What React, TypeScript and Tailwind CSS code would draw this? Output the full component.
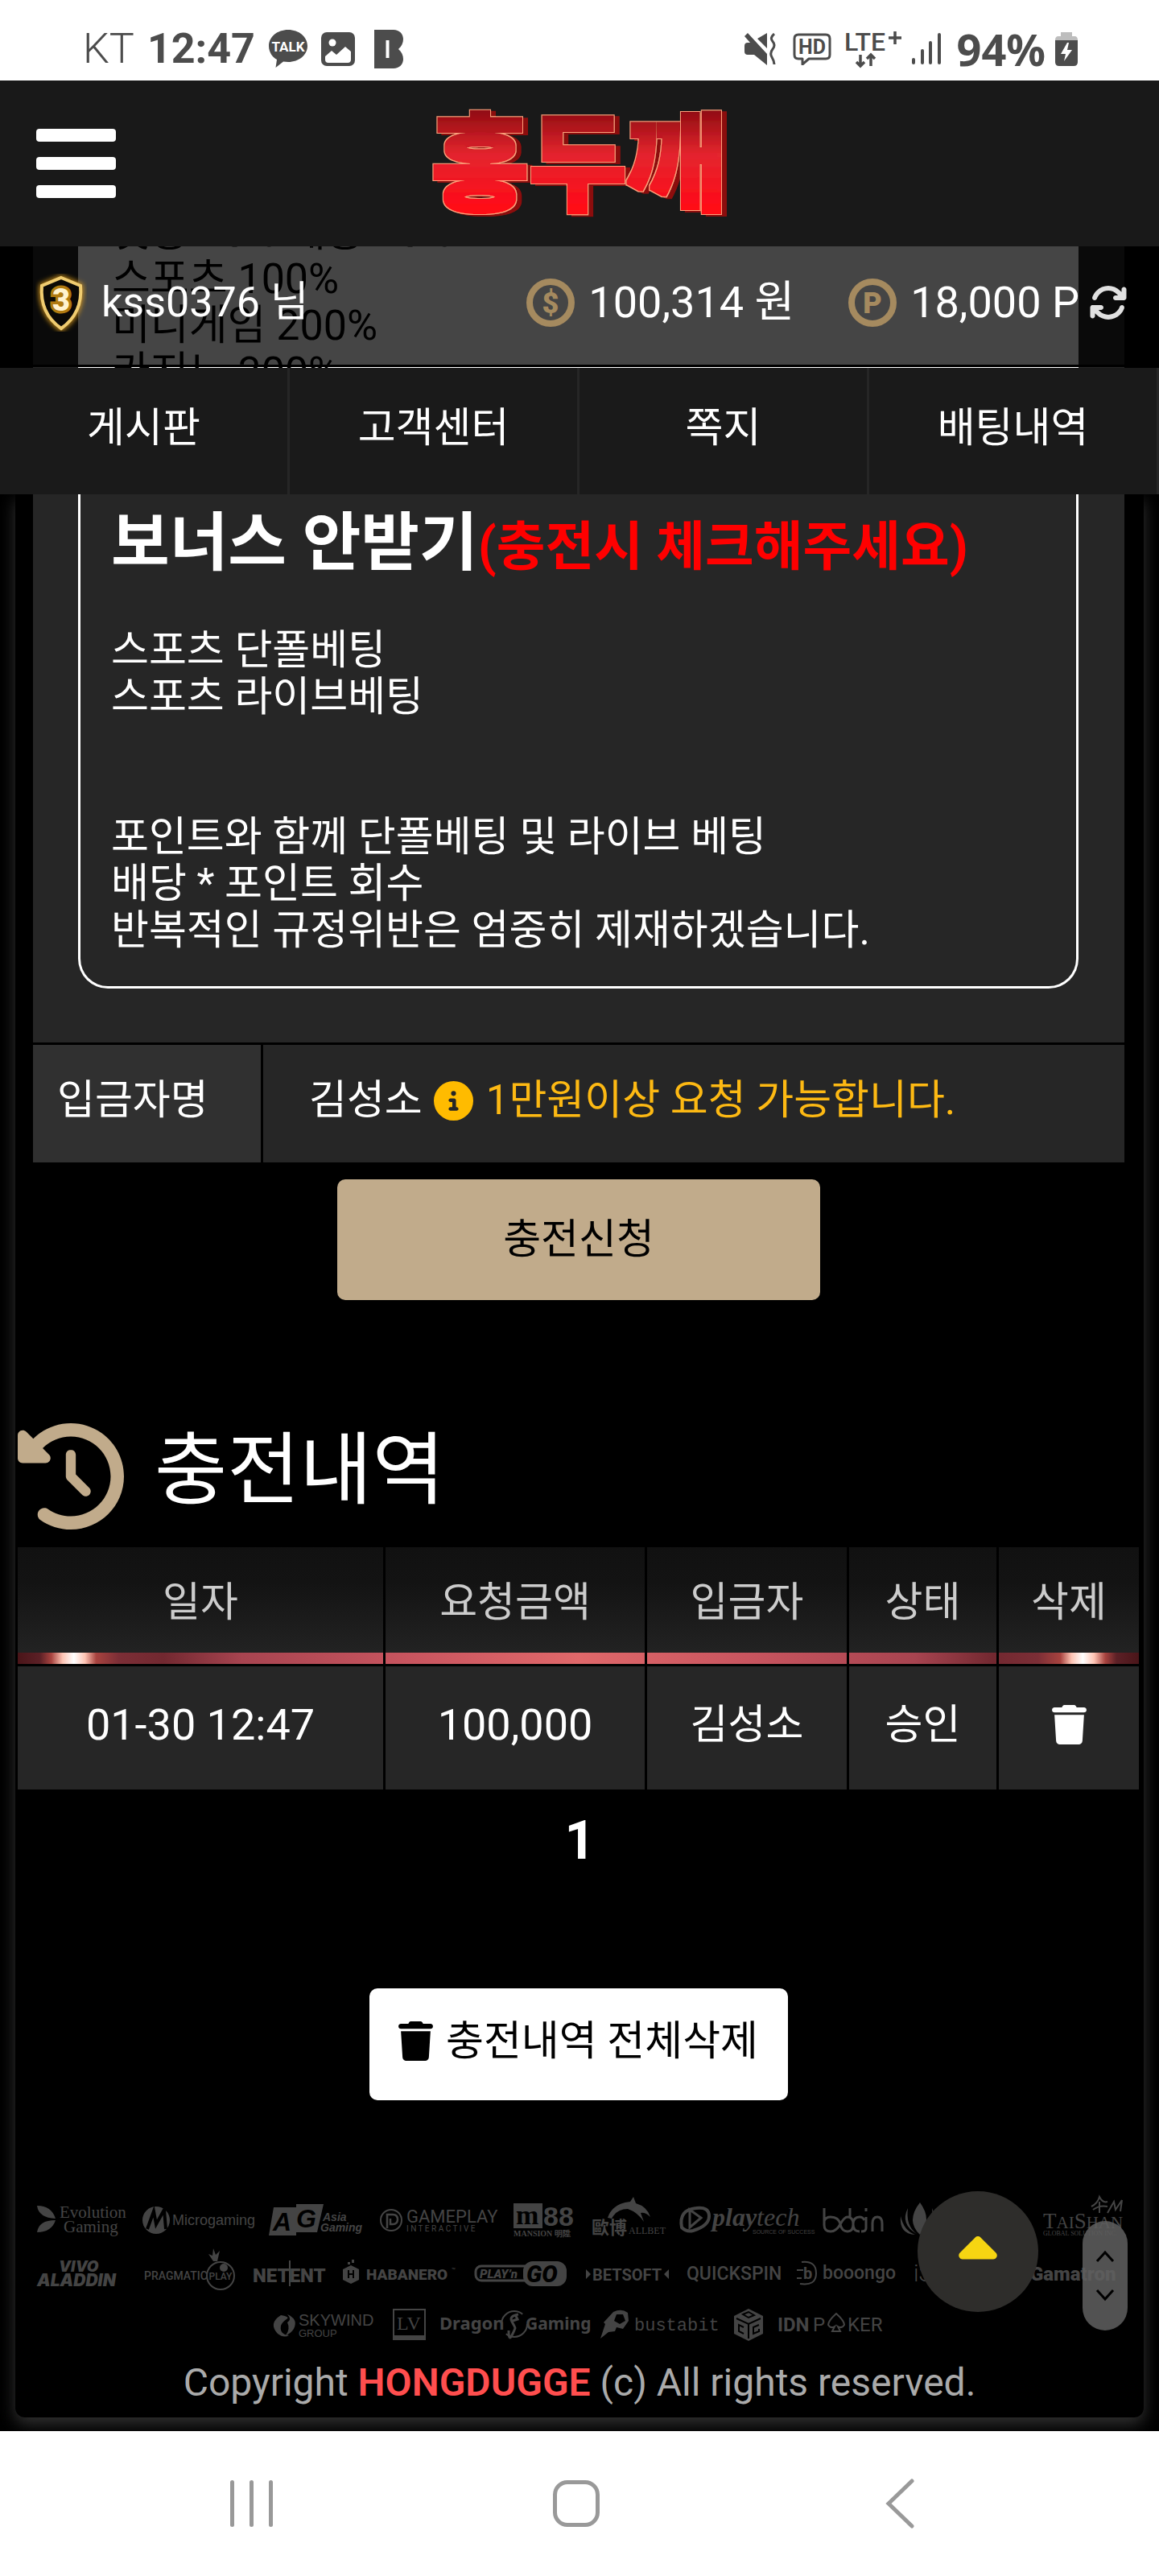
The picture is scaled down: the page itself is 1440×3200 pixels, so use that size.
import clsx from "clsx";
import { ReactNode } from "react";
import {
  FaArrowsRotate,
  FaCaretUp,
  FaCircleInfo,
  FaClockRotateLeft,
  FaTrash,
} from "react-icons/fa6";

const tabs = ["게시판", "고객센터", "쪽지", "배팅내역"];

const columns = [
  { label: "일자", width: "w-[457px]" },
  { label: "요청금액", width: "w-[325px]" },
  { label: "입금자", width: "w-[251px]" },
  { label: "상태", width: "w-[186px]" },
  { label: "삭제", width: "w-[174px]" },
];

const history = [
  { date: "01-30 12:47", amount: "100,000", name: "김성소", status: "승인" },
];

const StatusBar = () => (
  <div className="flex h-[100px] items-center justify-between bg-white pt-[22px] pr-[101px] pl-[103px] text-[52px] leading-none text-[#4c4c4c]">
    <div className="flex items-center">
      <span className="font-light">KT</span>
      <span className="ml-4 font-bold">12:47</span>
      <svg className="ml-4 h-12 w-[50px]" viewBox="0 0 50 48" fill="currentColor">
        <path d="M25 0C11.500 0 1 8.800 1 20c0 8 4.500 14 10 17L9.500 47 19 39.600c2 .300 4 .400 6 .400 13.500 0 24-8.800 24-20S38.500 0 25 0z" />
        <text x="25" y="27" textAnchor="middle" fontSize="17" fontWeight="700" fill="#fff">
          TALK
        </text>
      </svg>
      <svg className="ml-4 h-[42px] w-[42px]" viewBox="0 0 42 42">
        <rect width="42" height="42" rx="7" fill="currentColor" />
        <circle cx="14" cy="13" r="4.500" fill="#fff" />
        <path d="M5 30l8-7 6 5 11-10 7 6v10a4 4 0 0 1-4 4H9a4 4 0 0 1-4-4z" fill="#fff" />
      </svg>
      <svg className="ml-6 h-12 w-9" viewBox="0 0 36 48">
        <path
          d="M0 0h24c7 0 12 5 12 11.500 0 5-2 9-6 12.500 4 3.500 6 7.500 6 12.500C36 43 31 48 24 48H0z"
          fill="currentColor"
        />
        <path d="M16.500 13v22" stroke="#fff" strokeWidth="4" />
      </svg>
    </div>
    <div className="flex items-center">
      <svg className="h-10 w-10" viewBox="0 0 40 40" fill="currentColor">
        <path d="M0 16q0-4 4-4h3L0 4l4-4 24 26v14L12 27H4q-4 0-4-4zM16 7l12-7v19z" />
        <path
          d="M37 1q-6 5-2 9.500t0 9.500-1 10 3 9"
          fill="none"
          stroke="currentColor"
          strokeWidth="3"
        />
      </svg>
      <svg className="ml-5 h-10 w-12" viewBox="0 0 48 40" fill="none" stroke="currentColor" strokeWidth="3">
        <path d="M7 2h34q5 0 5 5v20q0 5-5 5H20l-8 7v-7H7q-5 0-5-5V7q0-5 5-5z" strokeLinejoin="round" />
        <text x="24" y="26" textAnchor="middle" fontSize="25" fontWeight="700" fill="currentColor" stroke="none">
          HD
        </text>
      </svg>
      <svg className="ml-4 h-12 w-[72px] overflow-visible" viewBox="0 0 72 48" fill="currentColor">
        <text x="0" y="26" fontSize="32" fontWeight="500">
          LTE
        </text>
        <path
          d="M63 2v16M55 10h16M20 31v14m-5-5 5 5 5-5M33 45V31m-5 5 5-5 5 5"
          fill="none"
          stroke="currentColor"
          strokeWidth="3.500"
        />
      </svg>
      <svg className="ml-3 h-10 w-9" viewBox="0 0 36 40" stroke="currentColor" strokeWidth="4" strokeLinecap="round">
        <path d="M2 33v4M13 22v15M23 12v25M34 2v35" />
      </svg>
      <span className="ml-5 font-['Noto_Sans',sans-serif] text-[54px] font-bold">94%</span>
      <svg className="ml-3 h-[42px] w-7" viewBox="0 0 28 42">
        <path d="M7 0h14v5h3q4 0 4 5H0q0-5 4-5h3z" fill="#bdbdbd" />
        <path d="M0 10h28v27q0 5-5 5H5q-5 0-5-5z" fill="currentColor" />
        <path d="M15 13L7 27h6l-2 9 10-14h-6l2-9z" fill="#fff" />
      </svg>
    </div>
  </div>
);

const Logo = () => (
  <svg className="h-[140px] w-[380px] overflow-visible" viewBox="0 0 380 140" role="img" aria-label="홍두깨">
    <defs>
      <linearGradient id="logoFill" x1="0" y1="0" x2="0" y2="1">
        <stop offset="0.150" stopColor="#7d060b" />
        <stop offset="0.500" stopColor="#e3242d" />
        <stop offset="0.850" stopColor="#ff0716" />
      </linearGradient>
      {/* thickened face, bright rim and a dark side going right */}
      <filter id="logoDepth" x="-10%" y="-10%" width="120%" height="120%">
        <feMorphology in="SourceAlpha" operator="dilate" radius="3" result="rimShape" />
        <feFlood floodColor="#ffa07c" />
        <feComposite in2="rimShape" operator="in" result="rim" />
        <feOffset in="rimShape" dx="6" dy="2" result="sideShape" />
        <feFlood floodColor="#8c0d0a" />
        <feComposite in2="sideShape" operator="in" result="side" />
        <feMorphology in="SourceGraphic" operator="dilate" radius="2" result="face" />
        <feMerge>
          <feMergeNode in="side" />
          <feMergeNode in="rim" />
          <feMergeNode in="face" />
        </feMerge>
      </filter>
    </defs>
    <text
      x="188"
      y="118"
      fontFamily='"Noto Sans CJK KR", sans-serif'
      fontSize="132"
      fontWeight="900"
      textAnchor="middle"
      fill="url(#logoFill)"
      filter="url(#logoDepth)"
    >
      홍두깨
    </text>
  </svg>
);

const Header = () => (
  <header className="relative flex h-[206px] items-center justify-center bg-[#191919]">
    <button aria-label="메뉴" className="absolute left-[45px] flex w-[99px] flex-col gap-[19px]">
      <span className="h-4 rounded bg-white" />
      <span className="h-4 rounded bg-white" />
      <span className="h-4 rounded bg-white" />
    </button>
    <a href="#">
      <Logo />
    </a>
  </header>
);

const Coin = ({ children }: { children: ReactNode }) => (
  <svg className="h-[60px] w-[60px]" viewBox="0 0 60 60">
    <circle cx="30" cy="30" r="26" fill="none" stroke="#a58a5f" strokeWidth="8" />
    {children}
  </svg>
);

const UserBar = () => (
  <div className="relative h-[151px] overflow-hidden bg-black pr-[43px] pl-[41px]">
    {/* the notice scrolls away under the bar */}
    <div className="flex h-full items-end overflow-hidden bg-[#262626] pr-[57px] pl-14">
      <div className="h-[151px] w-full bg-white pl-[42px] text-[52px] leading-[58px] text-black">
        <div className="-mt-[46px]">
          첫충 10% 매충 10%
          <br />
          스포츠 100%
          <br />
          미니게임 200%
          <br />
          카지노 300%
        </div>
      </div>
    </div>
    <div className="absolute inset-x-0 top-0 flex h-[150px] items-center border-b-[3px] border-black bg-black/73 pr-[39px] pb-2 pl-[44px] text-[54px]">
      <svg className="h-[72px] w-16" viewBox="0 0 64 72">
        <defs>
          <filter id="glow" x="-30%" y="-30%" width="160%" height="160%">
            <feGaussianBlur stdDeviation="3" />
          </filter>
        </defs>
        <path
          d="M32 5l24 10q3 34-24 53Q5 49 8 15z"
          fill="none"
          stroke="#d99a1f"
          strokeWidth="6"
          filter="url(#glow)"
        />
        <path d="M32 5l24 10q3 34-24 53Q5 49 8 15z" fill="#0b0906" stroke="#f0cc70" strokeWidth="4" />
        <text x="32" y="46" textAnchor="middle" fontSize="38" fontWeight="900" fill="#fff3cf" stroke="#b07a10" strokeWidth="7" paintOrder="stroke">
          3
        </text>
      </svg>
      <span className="ml-[18px] flex-1 text-[52px]">kss0376 님</span>
      <Coin>
        <text x="30" y="43" textAnchor="middle" fontSize="36" fontWeight="900" fill="#a58a5f">
          $
        </text>
      </Coin>
      <span className="ml-[17px]">100,314 원</span>
      <span className="ml-[67px] flex">
        <Coin>
          <text x="30" y="43" textAnchor="middle" fontSize="36" fontWeight="900" fill="#a58a5f">
            P
          </text>
        </Coin>
      </span>
      <span className="mr-3 ml-[17px]">18,000 P</span>
      <button aria-label="새로고침">
        <FaArrowsRotate className="size-12 text-[#e0e0e0]" />
      </button>
    </div>
  </div>
);

const TabNav = () => (
  <nav className="grid grid-cols-4 bg-[#1a1a1a]">
    {tabs.map((tab) => (
      <a
        key={tab}
        href="#"
        className="flex h-[157px] items-center justify-center border-r-[3px] border-[#262626] pb-2"
      >
        {tab}
      </a>
    ))}
  </nav>
);

const DepositForm = () => (
  <section className="mr-6 ml-[22px]">
    <div className="bg-[#262626] pr-[57px] pb-[67px] pl-14">
      <div className="rounded-b-[37px] border-x-[3px] border-b-[3px] border-white pb-10 pl-[38px]">
        <h1 className="h-[114px] text-[79px] leading-[122px] font-bold whitespace-nowrap">
          보너스 안받기
          <span className="text-[66px] text-[#f00]">(충전시 체크해주세요)</span>
        </h1>
        <p className="pt-[51px] leading-[58px]">
          스포츠 단폴베팅
          <br />
          스포츠 라이브베팅
          <br />
          <br />
          <br />
          포인트와 함께 단폴베팅 및 라이브 베팅
          <br />
          배당 * 포인트 회수
          <br />
          반복적인 규정위반은 엄중히 제재하겠습니다.
        </p>
      </div>
    </div>
    <div className="mt-[3px] flex h-[146px] gap-[3px]">
      <div className="flex w-[283px] items-center bg-[#303030] pb-2 pl-[30px]">입금자명</div>
      <div className="flex flex-1 items-center bg-[#262626] pb-2 pl-[57px]">
        김성소
        <FaCircleInfo className="ml-3.5 size-[49px] text-[#fb0]" />
        <span className="ml-4 text-[#fdb913]">1만원이상 요청 가능합니다.</span>
      </div>
    </div>
    <button className="mx-auto mt-[21px] flex h-[150px] w-[600px] items-center justify-center rounded-[10px] bg-[#c1ab8b] text-black">
      충전신청
    </button>
  </section>
);

const HistoryTable = () => (
  <table className="w-full table-fixed border-separate border-spacing-0 text-center">
    <thead>
      <tr className="bg-[linear-gradient(90deg,#4a1519_0%,#5c2026_2%,#a8433f_3%,#ffc4b4_4%,#fff_5%,#ffc4b4_6%,#a8433f_7%,#7c2e36_9%,#722830_13%,#a84450_20%,#c9555f_35%,#e0686a_50%,#c9555f_65%,#a84450_80%,#722830_87%,#7c2e36_91%,#a8433f_93%,#ffc4b4_94%,#fff_95%,#ffc4b4_96%,#a8433f_97%,#5c2026_98%,#4a1519_100%),linear-gradient(180deg,#111_0%,#131313_30%,#252525_100%)] bg-[length:100%_14px,100%_100%] bg-bottom bg-no-repeat">
        {columns.map((col, i) => (
          <th
            key={col.label}
            className={clsx(
              "h-[145px] pb-2 font-normal text-[#ccc]",
              col.width,
              i < columns.length - 1 && "border-r-[3px] border-black"
            )}
          >
            {col.label}
          </th>
        ))}
      </tr>
    </thead>
    <tbody>
      {history.map((row) => (
        <tr key={row.date} className="bg-[#262626] *:h-[156px] *:border-t-[3px] *:border-black *:pb-2">
          <td className="border-r-[3px] text-[54px]">{row.date}</td>
          <td className="border-r-[3px] text-[54px]">{row.amount}</td>
          <td className="border-r-[3px]">{row.name}</td>
          <td className="border-r-[3px]">{row.status}</td>
          <td>
            <button aria-label="삭제" className="block w-full">
              <FaTrash className="mx-auto size-[49px]" />
            </button>
          </td>
        </tr>
      ))}
    </tbody>
  </table>
);

const Brand = ({ width, children }: { width: string; children: ReactNode }) => (
  <svg className={clsx("h-16 shrink-0 overflow-visible", width)} fill="currentColor">
    {children}
  </svg>
);

const serif = '"Liberation Serif", serif';
const sans = '"Liberation Sans", sans-serif';

const Brands = () => (
  <div className="text-[#444]">
    <div className="flex justify-between px-[27px]">
      <Brand width="w-[110px]">
        <path d="M0 15q18 0 23 16Q2 30 0 15zM0 48q18 0 23-15Q2 33 0 48z" />
        <text x="28" y="30" fontSize="21" fontFamily={serif}>Evolution</text>
        <text x="33" y="48" fontSize="21" fontFamily={serif}>Gaming</text>
      </Brand>
      <Brand width="w-[136px]">
        <circle cx="17" cy="33" r="17" />
        <path d="M6 44l8-22 3 16 10-18 2 24" fill="none" stroke="#000" strokeWidth="4" />
        <text x="37" y="39" fontSize="18" fontFamily={sans}>Microgaming</text>
      </Brand>
      <Brand width="w-[117px]">
        <path d="M6 17h28v-4h34l-8 35H34v4H0z" />
        <text x="5" y="46" fontSize="32" fontWeight="700" fontStyle="italic" fill="#000" fontFamily={sans}>A</text>
        <text x="34" y="42" fontSize="32" fontWeight="700" fontStyle="italic" fill="#000" fontFamily={sans}>G</text>
        <text x="67" y="34" fontSize="14" fontWeight="700" fontStyle="italic" fontFamily={sans}>Asia</text>
        <text x="64" y="47" fontSize="14" fontWeight="700" fontStyle="italic" fontFamily={sans}>Gaming</text>
      </Brand>
      <Brand width="w-[145px]">
        <circle cx="14" cy="33" r="13" fill="none" stroke="currentColor" strokeWidth="2" />
        <path d="M9 43V26h7q6 0 6 6t-6 6h-3v-7" fill="none" stroke="currentColor" strokeWidth="2.500" />
        <text x="33" y="36" fontSize="22">GAMEPLAY</text>
        <text x="33" y="47" fontSize="10">I N T E R A C T I V E</text>
      </Brand>
      <Brand width="w-[75px]">
        <path d="M0 12h36v31H0z" />
        <text x="3" y="38" fontSize="34" fontWeight="700" fill="#000" fontFamily={serif}>m</text>
        <text x="37" y="40" fontSize="34" fontWeight="700" fontFamily={sans}>88</text>
        <text x="0" y="53" fontSize="10" fontWeight="700" fontFamily={serif}>MANSION 明陞</text>
      </Brand>
      <Brand width="w-[87px]">
        <path d="M20 30q6-18 28-20l4-6 3 8q14 4 18 17-6-6-12-5l4 11q-8-12-20-16-14 0-20 12z" />
        <text x="0" y="50" fontSize="22" fontWeight="700" fontFamily='"Noto Sans CJK SC", sans-serif'>歐博</text>
        <text x="46" y="50" fontSize="12" fontFamily={serif}>ALLBET</text>
      </Brand>
      <Brand width="w-[158px]">
        <path d="M4 42q-4-22 18-24 16-2 16 10T18 46q-8 2-14-4z" fill="none" stroke="currentColor" strokeWidth="4" />
        <path d="M14 20l14 10-14 12z" fill="none" stroke="currentColor" strokeWidth="3" />
        <text x="42" y="40" fontSize="32" fontStyle="italic" fontFamily={serif}>
          <tspan fontWeight="700">play</tspan>tech
        </text>
        <text x="92" y="50" fontSize="7" fontFamily={sans}>SOURCE OF SUCCESS</text>
      </Brand>
      <Brand width="w-[76px]">
        <path
          d="M2 18v21q0 8 8 8 7 0 12-9t9-9q7 0 7 9t-7 9-9-9-12-9q-6 0-8 5M34 18v12M46 47q-8 0-8-9t8-9q4 0 6 4M54 29v14q0 4-6 4M54 18v4M62 47V37q0-8 6-8t6 8v10"
          fill="none"
          stroke="currentColor"
          strokeWidth="3"
        />
      </Brand>
      <Brand width="w-[156px]">
        <path d="M24 51Q6 34 24 11q16 22 0 40zM20 50Q6 40 9 18q-10 20 11 32zM18 51Q4 46 0 28q-2 22 18 23zM28 50q14-10 11-32 10 20-11 32zM30 51q14-5 18-23 2 22-18 23z" />
        <text x="52" y="42" fontSize="26" fontFamily={serif}>LOTUS</text>
      </Brand>
      <Brand width="w-[98px]">
        <path d="M60 16q8-4 10-12 4 8 10 6m-18 10q8-6 18-4m-10-6v14m10 0l8-14 2 10 8-12-2 14" fill="none" stroke="currentColor" strokeWidth="2" />
        <text x="0" y="43" fontSize="27" fontFamily={serif}>
          T<tspan fontSize="21">AI</tspan>S<tspan fontSize="21">HAN</tspan>
        </text>
        <text x="0" y="52" fontSize="8" fontFamily={serif}>GLOBAL SOLUTION INC.</text>
      </Brand>
    </div>
    <div className="flex justify-between px-[27px]">
      <Brand width="w-[111px]">
        <text x="27" y="33" fontSize="19" fontWeight="900" fontStyle="italic" fontFamily="Inter, sans-serif">VIVO</text>
        <text x="0" y="51" fontSize="21" fontWeight="900" fontStyle="italic" fontFamily="Inter, sans-serif">ALADDIN</text>
      </Brand>
      <Brand width="w-[113px]">
        <text x="0" y="43" fontSize="14" fontWeight="500">PRAGMATIC</text>
        <circle cx="95" cy="38" r="17" fill="none" stroke="currentColor" strokeWidth="2" />
        <circle cx="99" cy="28" r="5" />
        <path d="M86 20l-6-9 5 2 1-9 3 8 5-5-3 13z" />
        <text x="95" y="43" textAnchor="middle" fontSize="12" fontWeight="500">PLAY</text>
      </Brand>
      <Brand width="w-[90px]">
        <text x="0" y="46" fontSize="24" fontWeight="900">NETENT</text>
        <path d="M46 19v32" stroke="currentColor" strokeWidth="2" />
      </Brand>
      <Brand width="w-[142px]">
        <path d="M0 30l10-5 10 5v13l-10 5-10-5zM6 21h3v3H6zM11 18h3v4h-3z" />
        <path d="M7 31v10M13 31v10M7 36h6" stroke="#000" strokeWidth="2" />
        <text x="29" y="43" fontSize="19" fontWeight="900">HABANERO</text>
        <text x="135" y="34" fontSize="8">™</text>
      </Brand>
      <Brand width="w-[115px]">
        <rect x="1" y="26" width="70" height="18" rx="7" fill="none" stroke="currentColor" strokeWidth="3" />
        <rect x="60" y="20" width="54" height="31" rx="12" />
        <text x="6" y="41" fontSize="15" fontWeight="900" fontStyle="italic">PLAY’n</text>
        <text x="64" y="46" fontSize="29" fontWeight="900" fontStyle="italic" fill="#000">GO</text>
      </Brand>
      <Brand width="w-[103px]">
        <path d="M0 30l6 6-6 6zM103 30l-6 6 6 6z" />
        <text x="8" y="44" fontSize="20" fontWeight="700">BETSOFT</text>
      </Brand>
      <Brand width="w-[115px]">
        <text x="0" y="43" fontSize="23" fontWeight="500">QUICKSPIN</text>
      </Brand>
      <Brand width="w-[123px]">
        <path d="M6 21q18-2 18 14T4 48M0 31h8M0 41h6" fill="none" stroke="currentColor" strokeWidth="2" />
        <text x="8" y="42" fontSize="20" fontWeight="700">b</text>
        <text x="32" y="42" fontSize="23" fontWeight="500">booongo</text>
      </Brand>
      <Brand width="w-[123px]">
        <text x="0" y="45" fontSize="29" fontWeight="300">iSoftBet</text>
      </Brand>
      <Brand width="w-[114px]">
        <text x="0" y="44" fontSize="24" fontWeight="900">Gamatron</text>
      </Brand>
    </div>
    <div className="flex justify-center gap-[17px]">
      <Brand width="w-[132px]">
        <path d="M10 23q-16 10-4 23 8 6 14 2-12-1-10-12 2-5 7-8t-7-5zM18 22q14 6 8 18-4 6-10 8 6-8 2-16 6-4 0-10z" />
        <text x="32" y="36" fontSize="20" fontFamily={sans}>SKYWIND</text>
        <text x="32" y="50" fontSize="13" fontFamily={sans}>GROUP</text>
      </Brand>
      <Brand width="w-[41px]">
        <rect x="1" y="16" width="39" height="37" fill="none" stroke="currentColor" strokeWidth="2" />
        <path d="M1 48h39v5H1z" />
        <text x="20" y="41" textAnchor="middle" fontSize="24" fontFamily={serif}>LV</text>
      </Brand>
      <Brand width="w-[183px]">
        <text x="0" y="41" fontSize="22" fontWeight="700" fontFamily='"Noto Sans", sans-serif'>Dragon</text>
        <circle cx="93" cy="34" r="16" fill="none" stroke="currentColor" strokeWidth="2" strokeDasharray="36 14" />
        <path d="M98 22q-12 2-8 9t4 8-4 9-4-6m8-20l3 6-6 2" fill="none" stroke="currentColor" strokeWidth="3" />
        <text x="107" y="41" fontSize="21" fontWeight="700" fontFamily='"Noto Sans", sans-serif'>Gaming</text>
      </Brand>
      <Brand width="w-[149px]">
        <path d="M0 52l6-18-2-2 12-13q10-5 18 1l1 10-7 10-8-2-2 5-8 1zM20 22l-3 8 7 4 7-4-3-8z" fillRule="evenodd" />
        <text x="42" y="42" fontSize="22" fontFamily='"Liberation Mono", monospace'>bustabit</text>
      </Brand>
      <Brand width="w-[37px]">
        <path d="M18 15l18 9v22l-18 9-18-9V24z" />
        <path d="M3 27l15 7 15-7M18 34v18M11 22l7-3 7 4-7 3zM12 38l-6-3v8l6 3M31 35l-7 3v8l7-3v-3" fill="none" stroke="#000" strokeWidth="2" />
      </Brand>
      <Brand width="w-[136px]">
        <text x="0" y="43" fontSize="24" fontWeight="700">IDN</text>
        <text x="44" y="43" fontSize="24">P</text>
        <path d="M73 21q10 9 10 14-3 5-8 2l3 6H68l3-6q-5 3-8-2 0-5 10-14z" fill="none" stroke="currentColor" strokeWidth="2" />
        <text x="87" y="43" fontSize="24">KER</text>
      </Brand>
    </div>
  </div>
);

const AndroidNav = () => (
  <nav className="flex h-[180px] items-center justify-between bg-white pr-[304px] pl-[284px] text-[#999]">
    <button aria-label="최근 앱" className="flex h-[58px] w-[57px] justify-between px-0.5">
      <span className="w-[5px] rounded bg-current" />
      <span className="w-[5px] rounded bg-current" />
      <span className="w-[5px] rounded bg-current" />
    </button>
    <button aria-label="홈" className="mr-2.5 size-[58px] rounded-[18px] border-[5px] border-current" />
    <button aria-label="뒤로">
      <svg className="h-[62px] w-9" viewBox="0 0 36 62" fill="none" stroke="currentColor" strokeWidth="5" strokeLinecap="round">
        <path d="M33 3L4 31l29 28" />
      </svg>
    </button>
  </nav>
);

export default function App() {
  return (
    <div className="bg-black font-[Roboto,'Noto_Sans_CJK_KR',sans-serif] text-[51px] leading-[58px] text-white">
      <StatusBar />
      <Header />
      <UserBar />
      <TabNav />
      <main className="relative overflow-hidden px-[19px] pb-[17px]">
        <div className="rounded-b-[12px] bg-black pb-3.5 shadow-[0_8px_20px_#333]">
          <DepositForm />
          <section className="px-[3px] pt-[153px] pr-[6px]">
            <h2 className="flex h-[132px] items-center text-[98px]">
              <FaClockRotateLeft className="mr-[38px] size-[132px] text-[#c1ab8b]" />
              <span className="pb-3.5">충전내역</span>
            </h2>
            <div className="pt-[22px]">
              <HistoryTable />
            </div>
            <div className="flex h-[124px] items-center justify-center pt-1 pl-1 text-[66px] font-bold">
              <a href="#">1</a>
            </div>
            <button className="mx-auto mt-[123px] flex h-[139px] w-[520px] items-center justify-center gap-4 rounded-[10px] bg-white pb-2 text-black">
              <FaTrash className="h-[49px] w-[43px]" />
              충전내역 전체삭제
            </button>
          </section>
          <footer className="pt-[116px] text-center">
            <Brands />
            <p className="mt-3.5 text-5xl leading-[58px] text-[#aaa]">
              Copyright <b className="font-semibold text-[#ff4e4e]">HONGDUGGE</b> (c) All rights reserved.
            </p>
          </footer>
        </div>
        <a
          href="#"
          aria-label="맨 위로"
          className="absolute right-[150px] bottom-[148px] flex size-[150px] items-center justify-center rounded-full bg-[#2e2d2b] text-[#f6d512]"
        >
          <FaCaretUp className="size-[76px]" />
        </a>
        <div className="absolute right-[39px] bottom-[125px] flex h-[136px] w-14 flex-col items-center justify-center gap-8 rounded-full bg-[#606060]/85 text-black">
          <svg className="h-4 w-6" viewBox="0 0 24 16" fill="none" stroke="currentColor" strokeWidth="3">
            <path d="M2 14L12 3l10 11" />
          </svg>
          <svg className="h-4 w-6" viewBox="0 0 24 16" fill="none" stroke="currentColor" strokeWidth="3">
            <path d="M2 2l10 11L22 2" />
          </svg>
        </div>
      </main>
      <AndroidNav />
    </div>
  );
}
